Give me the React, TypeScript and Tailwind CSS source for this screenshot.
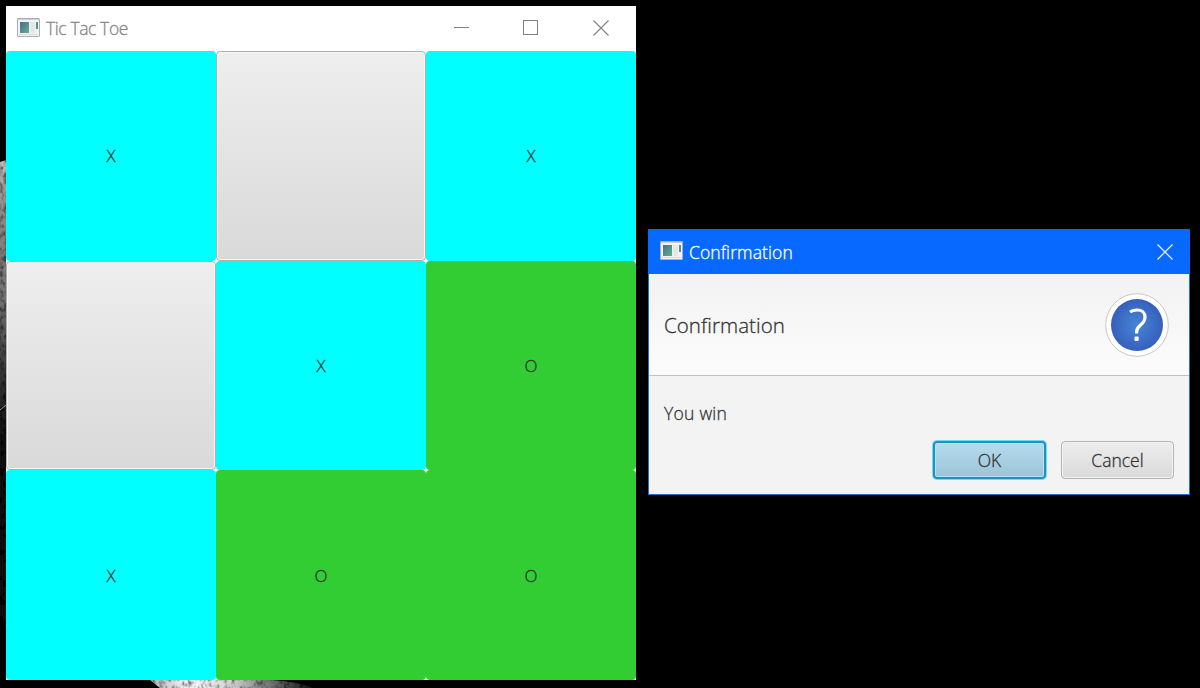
import React from "react";

type Mark = "X" | "O" | "";

const board: Mark[] = ["X", "", "X", "", "X", "O", "X", "O", "O"];

const cellStyle: Record<string, string> = {
  X: "bg-[#00ffff]",
  O: "bg-[#32cd32]",
  "": "border border-[#b5aeae] bg-linear-to-b from-[#eeeeee] to-[#d9d9d9] shadow-[inset_0_0_0_1px_#f5f5f5]",
};

function AppIcon({ className }: { className: string }) {
  return (
    <svg className={className} width="23" height="19" viewBox="0 0 23 19">
      <defs>
        <linearGradient id="screen" x1="0" y1="0" x2="1" y2="1">
          <stop offset="0" stopColor="#456f9b" />
          <stop offset="1" stopColor="#62b087" />
        </linearGradient>
      </defs>
      <rect x="0.5" y="0.5" width="22" height="18" rx="0.5" fill="#f1f3f5" stroke="#aab0b7" />
      <path d="M1 1.5H22" stroke="#c7d0da" />
      <rect x="3" y="4" width="9" height="11" fill="url(#screen)" />
      <rect x="13" y="4" width="5" height="11" fill="#e4e7e9" />
      <rect x="19" y="4" width="2" height="7" fill="#5a8d94" />
      <path d="M2 16.5H21" stroke="#d5dadd" />
    </svg>
  );
}

function Cross({ className }: { className: string }) {
  return (
    <svg className={className} width="16" height="16" viewBox="0 0 16 16" fill="none" stroke="currentColor">
      <path d="M0.5 0.5L15.5 15.5M15.5 0.5L0.5 15.5" strokeWidth="1.1" />
    </svg>
  );
}

function Wallpaper() {
  return (
    <svg className="absolute inset-0" width="1200" height="688" viewBox="0 0 1200 688">
      <defs>
        <linearGradient id="fur" x1="0" y1="0" x2="0" y2="1">
          <stop offset="0" stopColor="#b4b4b4" />
          <stop offset="0.1" stopColor="#858585" />
          <stop offset="0.3" stopColor="#6c6c6c" />
          <stop offset="0.45" stopColor="#343434" />
          <stop offset="0.6" stopColor="#0c0c0c" />
          <stop offset="1" stopColor="#080808" />
        </linearGradient>
        <linearGradient id="paw" x1="0" y1="0" x2="1" y2="0">
          <stop offset="0" stopColor="#aaaaaa" />
          <stop offset="0.25" stopColor="#f0f0f0" />
          <stop offset="0.5" stopColor="#c8c8c8" />
          <stop offset="0.8" stopColor="#585858" />
          <stop offset="1" stopColor="#101010" />
        </linearGradient>
        <filter id="grain" x="0" y="0" width="1" height="1">
          <feTurbulence type="fractalNoise" baseFrequency="0.25 0.16" numOctaves="2" seed="7" />
          <feColorMatrix values="3 0 0 0 -0.75  3 0 0 0 -0.75  3 0 0 0 -0.75  0 0 0 0 1" result="noise" />
          <feComposite in="SourceGraphic" in2="noise" operator="arithmetic" k1="0.85" k2="0.25" k3="0" k4="0" />
        </filter>
      </defs>
      <path d="M0 162L6 160V630L0 615Z" fill="url(#fur)" filter="url(#grain)" />
      <path d="M0 410L6 405" stroke="#999999" />
      <path d="M150 680H270Q300 682 313 688H160Z" fill="url(#paw)" filter="url(#grain)" />
    </svg>
  );
}

function GameWindow() {
  return (
    <section className="absolute left-[6px] top-[6px] flex h-[674px] w-[630px] flex-col bg-white">
      <header className="flex h-[45px] shrink-0 items-center pl-[11px] text-[#858585]">
        <AppIcon className="mb-[3px]" />
        <h1 className="mb-[2px] ml-[6px] text-[17.5px] leading-6 tracking-[-0.4px]">Tic Tac Toe</h1>
        <div className="mb-[2px] ml-auto mr-[27px] flex items-center text-[#808080]">
          <div className="mr-[54px] h-px w-[15px] bg-current" />
          <div className="mr-[55px] size-[15px] border border-current" />
          <Cross className="" />
        </div>
      </header>
      <div className="grid min-h-0 flex-1 grid-cols-3 grid-rows-3">
        {board.map((mark, i) => (
          <button
            key={i}
            className={`flex items-center justify-center rounded-[4px] pt-px text-[17px] leading-6 text-[#333333] ${cellStyle[mark]}`}
          >
            {mark}
          </button>
        ))}
      </div>
    </section>
  );
}

function QuestionBadge() {
  return (
    <svg width="64" height="64" viewBox="0 0 64 64">
      <defs>
        <radialGradient id="badge">
          <stop offset="0" stopColor="#4787d4" />
          <stop offset="1" stopColor="#365fbd" />
        </radialGradient>
      </defs>
      <circle cx="32" cy="32" r="31.3" fill="#ffffff" stroke="#cbc6c5" />
      <circle cx="32" cy="32" r="26" fill="url(#badge)" />
      <path
        d="M25 19Q28 17 32 17C37 17 40 19.6 40 24C40 27.6 38.2 29.8 35.8 31.8C33 34.2 31.6 35.8 31.6 39V40.5"
        fill="none"
        stroke="#ffffff"
        strokeWidth="3.2"
      />
      <rect x="29.5" y="43.5" width="4.2" height="4.5" rx="1" fill="#ffffff" />
    </svg>
  );
}

function ConfirmationDialog() {
  return (
    <section className="absolute left-[648px] top-[229px] flex h-[266px] w-[542px] flex-col border border-[#286fc9] bg-[#f3f3f3] text-[#333333]">
      <header className="-mx-px -mt-px flex h-[45px] shrink-0 items-center bg-[#0769ff] pl-[12px] text-white">
        <AppIcon className="mb-[2px]" />
        <h2 className="ml-[6px] text-[17.5px] leading-6 tracking-[0.1px]">Confirmation</h2>
        <Cross className="ml-auto mr-[17px]" />
      </header>
      <div className="flex h-[102px] shrink-0 items-center justify-between border-b border-[#c1c1c1] bg-linear-to-b from-[#f2f2f2] to-[#fcfcfc] pl-[15px] pr-[20px]">
        <h3 className="text-[20.5px] leading-7 tracking-[0.06px]">Confirmation</h3>
        <QuestionBadge />
      </div>
      <p className="mt-[25px] pl-[15px] text-[17.5px] leading-6 tracking-[0.25px]">You win</p>
      <div className="mt-[16px] flex justify-end gap-[15px] pr-[15px] text-[17.5px] leading-6">
        <button className="h-[38px] w-[113px] rounded-[4px] border-2 border-[#1d94bd] bg-linear-to-b from-[#b6dced] to-[#9bc4d7] pb-px shadow-[0_0_0_1px_#6ddcf9,inset_0_0_0_1px_#bce3f3]">
          OK
        </button>
        <button className="h-[38px] w-[113px] rounded-[4px] border border-[#b4b4b4] bg-linear-to-b from-[#ededed] to-[#dadada] pb-px shadow-[inset_0_0_0_1px_#f3f3f3]">
          Cancel
        </button>
      </div>
    </section>
  );
}

export default function App() {
  return (
    <main className="relative h-[688px] w-[1200px] overflow-hidden bg-black font-['Open_Sans','Noto_Sans',sans-serif] font-light [-webkit-text-stroke:0.3px_currentColor]">
      <Wallpaper />
      <GameWindow />
      <ConfirmationDialog />
    </main>
  );
}
